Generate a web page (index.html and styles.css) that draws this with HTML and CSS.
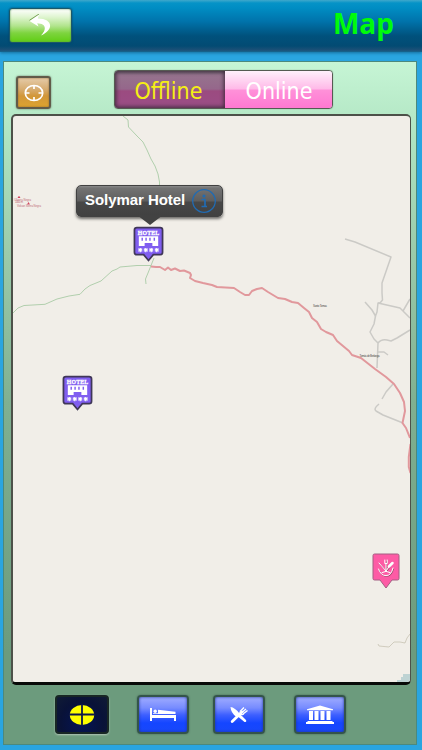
FILE: index.html
```html
<!DOCTYPE html>
<html lang="en">
<head>
    <meta charset="UTF-8">
    <meta name="viewport" content="width=device-width, initial-scale=1.0">
    <title>Map</title>
    <link rel="stylesheet" href="styles.css">
</head>
<body>
    <header class="topbar">
        <button class="back" aria-label="Back">
            <svg width="24" height="24" viewBox="0 0 24 24">
                <path d="M0.5 7 L10 0.5 L8.8 4.6 C23 4.5 26 15 12 21.5 C18 15 17 9.5 8.2 9.3 L9.5 12.5 Z" fill="#fff"/>
                <path d="M0.5 6.3 L10 0" fill="none" stroke="#477b1c" stroke-width=".7"/>
            </svg>
        </button>
        <h1>Map</h1>
    </header>

    <main class="panel">
        <div class="toolbar">
            <button class="locate" aria-label="Locate">
                <svg width="20" height="18" viewBox="0 0 20 18">
                    <g fill="none" stroke="#fff" stroke-width="1.7">
                        <ellipse cx="10" cy="9" rx="8.7" ry="7.5"/>
                        <path d="M10 1v4M10 13v4M1 9h4.5M14.5 9H19"/>
                    </g>
                </svg>
            </button>
            <div class="tabs">
                <button class="tab active">Offline</button>
                <button class="tab">Online</button>
            </div>
        </div>

        <div class="map">
            <svg class="roads" width="397" height="566" viewBox="13 116 397 566">
                <g fill="none" stroke="#a9cba6" stroke-width=".9">
                    <path d="M123 116 L128 120 L128.500 127 L137 136 L143 142 L147 150 L151 159 L155 166 L158 174 L159.500 182 V200"/>
                    <path d="M13 313 L18 308 L24 305.500 L45 304.300 L57 299 L69 296 L80 294.300 L85 289 L90 285.500 L101 281 L112 271 L117 269 L120 267 L128 266.300 L137 265.500 L151 265.500 L148 273 L145.500 279 L146 284"/>
                    <path d="M151 265.500 L154 258"/>
                </g>
                <g fill="none" stroke="#cbcac6" stroke-width="1.500" stroke-linejoin="round">
                    <path d="M345 239 L355 242 L391 257 L382 283 L382 293 L382.500 300 L380 303 L378 303 L377 312 L375.500 316 L372 310 L365 302"/>
                    <path d="M378 303 L400 308 L410 318M403 311 L410 299"/>
                    <path d="M375.500 316 L374 324 L370 332 L374 339 L378 343 L377 368"/>
                    <path d="M378 343 Q381 339 387 340 L391 341 L397 338 L410 330M378 352 L384 352 L388 355"/>
                    <path d="M393 384 L386 392 L382 399M379 404 Q373 409 376 411 L383 415 L403 423"/>
                </g>
                <g fill="none" stroke="#e1989c" stroke-width="2" stroke-linejoin="round">
                    <path d="M151 266.500 L156 267 L160 267 L165 270 L168 267.500 L171 270 L175 268.500 L180 271 L184 270.500 L190 273 L191 275 L190 278 L195 281 L203 283 L212 285 L217 287 L234 288 L240 292 L245 295 L249 295 L252 291 L257 289 L262 288 L268 292 L278 298 L285 299 L292 302 L298 303 L304 308 L309 312 L312 318 L317 322 L321 329 L326 332 L333 335 L337 341 L343 346 L349 351 L352 355 L361 358 L375 369 L386 377 L394 384 L400 393 L404 402 L405 411 L402.500 423 L406 428 L410 438"/>
                    <path d="M410.500 444 L408.800 457 L408.800 467 L410.500 473"/>
                </g>
                <path d="M378 644 L379 646 L389 647 L394 642 L400 642 L405 643 L407 638 L410 634" fill="none" stroke="#c8c3b2" stroke-width=".8"/>
                <path d="M397 682 V680 H401 V677 H403 V674 H410 V682Z" fill="#bed3d3"/>
                <g fill="#d3445c">
                    <path d="M17.500 198 L19 195.700 L20.500 198ZM27 204.500 L28.500 202 L30 204.500Z"/>
                </g>
                <g class="place peak">
                    <text x="14" y="200.500" textLength="17">l Sierra Negra</text>
                    <text x="15" y="203.300" textLength="8">1400 m</text>
                    <text x="17" y="207" textLength="24">Volcan Sierra Negra</text>
                </g>
                <g class="place">
                    <text x="313" y="307" textLength="14">Santo Tomas</text>
                    <text x="359.500" y="356.500" textLength="20">Tomás de Berlanga</text>
                </g>
            </svg>

            <svg class="pin pin-solymar" width="31" height="37" viewBox="0 0 32 38">
                <g id="hotel">
                    <path d="M4 1.500 H28 Q30.500 1.500 30.500 4 V27 Q30.500 29.500 28 29.500 H21 L16 35.500 L11 29.500 H4 Q1.500 29.500 1.500 27 V4 Q1.500 1.500 4 1.500Z" fill="#805ef0" stroke="#403758" stroke-width="1.800"/>
                    <text x="5" y="9" textLength="22" class="hotel-text">HOTEL</text>
                    <path d="M6 10.500 H26 V20.500 H20 V17.500 H12 V20.500 H6Z" fill="#fff"/>
                    <path d="M9.500 12v3M13.500 12v3M17.500 12v3M22 12v3" stroke="#805ef0" stroke-width="1.500"/>
                    <path d="M7.500 22.500v4.500M5.500 23.500l4 2.500M9.500 23.500l-4 2.500M13.200 22.500v4.500M11.200 23.500l4 2.500M15.200 23.500l-4 2.500M18.800 22.500v4.500M16.800 23.500l4 2.500M20.800 23.500l-4 2.500M24.500 22.500v4.500M22.500 23.500l4 2.500M26.500 23.500l-4 2.500" stroke="#fff" stroke-width="1.200"/>
                </g>
            </svg>
            <svg class="pin pin-second" width="31" height="37" viewBox="0 0 32 38">
                <use href="#hotel"/>
            </svg>
            <svg class="pin pin-food" width="28" height="36" viewBox="0 0 28 36">
                <path d="M2.500 1 H25.500 Q27 1 27 2.500 V25.500 Q27 27 25.500 27 H20 L14 35 L8 27 H2.500 Q1 27 1 25.500 V2.500 Q1 1 2.500 1Z" fill="#fd5ba5" stroke="#a45f82" stroke-width="1"/>
                <g fill="none" stroke="#9b526f" stroke-width="1" transform="translate(.6 .7)">
                    <path d="M6.500 16 Q9 23 14 22.500 Q19 23 21 15M7 10 L14 18 L20 10M14 7 V18"/>
                </g>
                <g fill="none" stroke="#fff" stroke-width="1" stroke-linecap="round">
                    <path d="M6.500 16 Q9 23 14 22.500 Q19 23 21 15M7 10 L14 18 L19 11M10 19.500 Q14 17 18 19.500M14 11 V18M12.800 7v3.500h2.400V7"/>
                    <path d="M17 13.500 L20.500 10" stroke-width="2.500"/>
                </g>
            </svg>

            <div class="callout">
                <span>Solymar Hotel</span>
                <svg width="26" height="26" viewBox="0 0 26 26">
                    <circle cx="13" cy="13" r="11.300" fill="none" stroke="#216bb2" stroke-width="1.300"/>
                    <circle cx="13" cy="8" r="1.600" fill="#216bb2"/>
                    <path d="M10.500 11.500H14V18M10.500 18.500H16" fill="none" stroke="#216bb2" stroke-width="1.700"/>
                </svg>
            </div>
        </div>

        <nav class="filters">
            <button class="filter selected" aria-label="All">
                <svg width="26" height="22" viewBox="0 0 26 22">
                    <ellipse cx="13" cy="11" rx="12.200" ry="10" fill="#ff0"/>
                    <path d="M13 0V22M0 10.500H26" stroke="#10194a" stroke-width="1.800"/>
                </svg>
            </button>
            <button class="filter" aria-label="Hotels">
                <svg width="28" height="16" viewBox="0 0 28 16">
                    <path d="M1 1H3V8H27V14H25V11H3V14H1Z" fill="#fff"/>
                    <circle cx="6.200" cy="4.300" r="1.700" fill="#fff"/>
                    <path d="M9 2.800 L26.500 4.700 V7 H4 V6.300 H9Z" fill="#fff"/>
                </svg>
            </button>
            <button class="filter" aria-label="Restaurants">
                <svg width="20" height="18" viewBox="0 0 20 18">
                    <path d="M1.500 1 Q6 1.500 10.500 7.500 L17 14 Q18 16 15.500 16 L9.500 11 L7 10.500 Q2 7 1.500 1Z" fill="#fff"/>
                    <path d="M3.200 15.500 L13 6" stroke="#fff" stroke-width="2.800" stroke-linecap="round"/>
                    <path d="M11 5.500 L15 1.500M13 6.500 L17 3M14 8 L18.500 4.500M11 5.500 Q12 10 15 8" fill="none" stroke="#fff" stroke-width="1.400"/>
                </svg>
            </button>
            <button class="filter" aria-label="Museums">
                <svg width="30" height="20" viewBox="0 0 30 20">
                    <path d="M15 .5 L28 4.300 V5.300 H2 V4.300Z M4 6h4v9H4Z M9.500 6h4v9h-4Z M15.500 6h4v9h-4Z M21.500 6h4v9h-4Z M2.500 16H27.500V17H29V19H1V17H2.500Z" fill="#fff"/>
                </svg>
            </button>
        </nav>
    </main>
</body>
</html>
```
FILE: styles.css
```css
* {
    box-sizing: border-box;
}

body {
    margin: 0;
    height: 750px;
    overflow: hidden;
    display: flex;
    flex-direction: column;
    background: #2aa5e0;
    font-family: "DejaVu Sans Condensed", "DejaVu Sans", sans-serif;
    font-stretch: condensed;
}

button {
    padding: 0;
    border: 0;
    display: flex;
    align-items: center;
    justify-content: center;
    font-family: inherit;
    font-stretch: inherit;
}

h1 {
    margin: 0;
    font-family: "Open Sans", sans-serif;
    font-size: 28px;
    font-stretch: normal;
    line-height: 40px;
    color: #00fb0b;
}

.topbar {
    height: 52px;
    flex: none;
    display: flex;
    align-items: flex-start;
    justify-content: space-between;
    padding: 8px 28px 0 9px;
    background: linear-gradient(#3fa8cb, #0593c7 3px, #008dc3 8px, #0074ac 21px, #00517c 36px, #034b73 46px, #1c5077 50px, #15668f);
    box-shadow: 0 1px 3px #166d9c;
}

.topbar h1 {
    margin-top: -5px;
}

.back {
    width: 63px;
    height: 35px;
    border: 1px solid #1c5868;
    border-radius: 3px;
    background: linear-gradient(#fff, #dff5d0 8px, #b1e48c 17px, #7ed43f 24px, #66cf1d 31px);
    box-shadow: 0 0 2px #063f60, inset 0 0 2px #4f8e4b;
}

.panel {
    height: 684px;
    margin: 9px 5px 0 3px;
    border: 1px solid #4c897d;
    background: linear-gradient(#c6f5d5, #aee3c0 80px, #9bcbaa 190px, #80b091 340px, #6c9b7d 590px);
    display: flex;
    flex-direction: column;
}

.toolbar {
    height: 52px;
    flex: none;
    display: flex;
    align-items: flex-start;
    padding: 8px 0 0 12px;
}

.locate {
    width: 35px;
    height: 33px;
    margin-top: 6px;
    border: 2px solid #615b49;
    border-radius: 3px;
    background: linear-gradient(#e5cba8, #d7ad72 11px, #d29739 18px, #dda32f);
    box-shadow: 0 0 2px #60705f, inset 0 0 2px #8a6530;
}

.tabs {
    display: flex;
    width: 219px;
    height: 39px;
    margin-left: 63px;
    border: 1px solid #555b52;
    border-radius: 4px;
    overflow: hidden;
    box-shadow: 0 0 1px #687d6c;
}

.tab {
    flex: 1;
    padding: 3px 0 0 1px;
    color: #fff;
    font-size: 23px;
    line-height: 34px;
    background: linear-gradient(#fff0fb, #ffb9e8 18px, #ff91d9 19px, #ff78d1);
}

.tab.active {
    flex: 0 0 110px;
    padding: 3px 3px 0 0;
    color: #f5ef14;
    background: linear-gradient(#776977, #96738d 4px, #95678b 18px, #9b4b80 20px, #9b4d86);
    box-shadow: inset 0 0 4px 1px #3b2839;
}

.map {
    position: relative;
    width: 400px;
    height: 571px;
    flex: none;
    margin-left: 7px;
    border: solid #4d5149;
    border-width: 2px 1px 3px 2px;
    border-bottom-color: #080a08;
    border-radius: 5px;
    background: #f1eee8;
}

.roads {
    display: block;
    border-radius: 3px;
}

.place text {
    font-family: "Liberation Sans", sans-serif;
    font-size: 2.8px;
    fill: #4c4a47;
}

.place.peak text {
    fill: #bf6a77;
}

.pin {
    position: absolute;
}

.pin-solymar {
    left: 120px;
    top: 110px;
}

.pin-second {
    left: 49px;
    top: 259px;
}

.pin-food {
    left: 359px;
    top: 437px;
}

.hotel-text {
    font: bold 6px "Liberation Serif", serif;
    fill: #fff;
    stroke: #fff;
    stroke-width: 0.3px;
}

.callout {
    position: absolute;
    left: 63px;
    top: 69px;
    width: 147px;
    height: 32px;
    padding: 0 5px 1px 8px;
    border: 1px solid #414141;
    border-radius: 5px;
    background: linear-gradient(#8b8b8b, #737373 2px, #5e5e5e 15px, #484848 16px, #414141);
    box-shadow: 0 2px 3px rgba(0, 0, 0, 0.55);
    display: flex;
    align-items: center;
    justify-content: space-between;
    color: #fff;
    font: bold 15px "Liberation Sans", sans-serif;
}

.callout span {
    margin-top: -2px;
    letter-spacing: -0.05px;
}

.callout::after {
    content: "";
    position: absolute;
    left: 60px;
    top: 29px;
    width: 26px;
    height: 10px;
    background: #424242;
    clip-path: polygon(0 0, 100% 0, 50% 100%);
}

.filters {
    display: flex;
    padding: 10px 0 0 51px;
}

.filter {
    width: 52px;
    height: 39px;
    margin-right: 24px;
    border: 2px solid #34544b;
    border-radius: 4px;
    background: linear-gradient(#a0acff, #768bff 11px, #3d5fff 18px, #1546ff 26px, #1847fa);
    box-shadow: 0 0 2px #42624f, inset 0 0 3px #213593;
}

.filter:nth-child(3) {
    margin-right: 29px;
}

.filter.selected {
    width: 54px;
    margin-right: 28px;
    border-color: #182725;
    background: radial-gradient(ellipse at 50% 75%, #051456, #091238 60%, #101b35);
    box-shadow: 0 1px 2px #b1c5b6;
}
```
